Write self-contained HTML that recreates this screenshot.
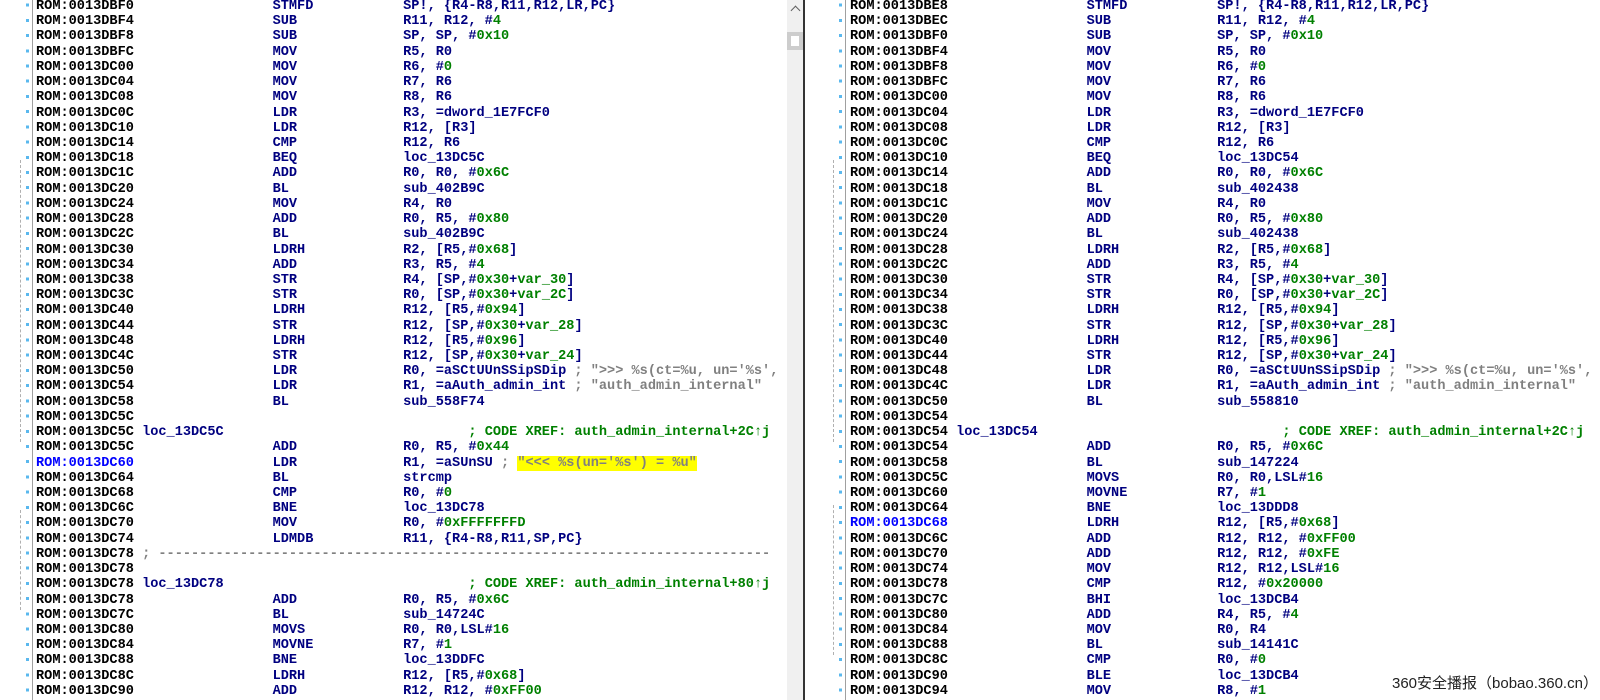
<!DOCTYPE html>
<html><head><meta charset="utf-8"><style>
html,body{margin:0;padding:0;width:1600px;height:700px;overflow:hidden;background:#fff}
.pane{position:absolute;top:0;height:700px;overflow:hidden;background:#fff}
pre{position:absolute;margin:0;top:-1px;font-family:"Liberation Mono","DejaVu Sans Mono",monospace;font-weight:bold;font-size:13.6px;line-height:15.22px;color:#000080;white-space:pre}
i{font-style:normal;color:#000}
i.b{color:#0000ff}
s{text-decoration:none;color:#008000}
u{text-decoration:none;color:#808080}
mark{background:#ffff00;color:#808080}
.dots{position:absolute;top:0;width:3px;height:700px;background:repeating-linear-gradient(to bottom,transparent 0,transparent 3.6px,#5ab8ee 3.6px,#5ab8ee 6.6px,transparent 6.6px,transparent 15.22px)}
.vl{position:absolute;top:0;width:1px;height:700px;background:#a0a0a0}
.dash{position:absolute;width:0;border-left:1px dashed #b0b0b0}
</style></head><body>
<div class="pane" style="left:0;width:787px">
<div class="vl" style="left:32px"></div>
<div class="dots" style="left:26px"></div>
<div class="dash" style="left:20px;top:160px;height:282px"></div>
<div class="dash" style="left:20px;top:510px;height:100px"></div>
<pre style="left:36px"><i>ROM:0013DBF0</i>                 STMFD           SP!, {R4-R8,R11,R12,LR,PC}
<i>ROM:0013DBF4</i>                 SUB             R11, R12, #<s>4</s>
<i>ROM:0013DBF8</i>                 SUB             SP, SP, #<s>0x10</s>
<i>ROM:0013DBFC</i>                 MOV             R5, R0
<i>ROM:0013DC00</i>                 MOV             R6, #<s>0</s>
<i>ROM:0013DC04</i>                 MOV             R7, R6
<i>ROM:0013DC08</i>                 MOV             R8, R6
<i>ROM:0013DC0C</i>                 LDR             R3, =dword_1E7FCF0
<i>ROM:0013DC10</i>                 LDR             R12, [R3]
<i>ROM:0013DC14</i>                 CMP             R12, R6
<i>ROM:0013DC18</i>                 BEQ             loc_13DC5C
<i>ROM:0013DC1C</i>                 ADD             R0, R0, #<s>0x6C</s>
<i>ROM:0013DC20</i>                 BL              sub_402B9C
<i>ROM:0013DC24</i>                 MOV             R4, R0
<i>ROM:0013DC28</i>                 ADD             R0, R5, #<s>0x80</s>
<i>ROM:0013DC2C</i>                 BL              sub_402B9C
<i>ROM:0013DC30</i>                 LDRH            R2, [R5,#<s>0x68</s>]
<i>ROM:0013DC34</i>                 ADD             R3, R5, #<s>4</s>
<i>ROM:0013DC38</i>                 STR             R4, [SP,#<s>0x30</s>+<s>var_30</s>]
<i>ROM:0013DC3C</i>                 STR             R0, [SP,#<s>0x30</s>+<s>var_2C</s>]
<i>ROM:0013DC40</i>                 LDRH            R12, [R5,#<s>0x94</s>]
<i>ROM:0013DC44</i>                 STR             R12, [SP,#<s>0x30</s>+<s>var_28</s>]
<i>ROM:0013DC48</i>                 LDRH            R12, [R5,#<s>0x96</s>]
<i>ROM:0013DC4C</i>                 STR             R12, [SP,#<s>0x30</s>+<s>var_24</s>]
<i>ROM:0013DC50</i>                 LDR             R0, =aSCtUUnSSipSDip <u>; "&gt;&gt;&gt; %s(ct=%u, un='%s', sip=%s, dip=%s)"</u>
<i>ROM:0013DC54</i>                 LDR             R1, =aAuth_admin_int <u>; "auth_admin_internal"</u>
<i>ROM:0013DC58</i>                 BL              sub_558F74
<i>ROM:0013DC5C</i>
<i>ROM:0013DC5C</i> loc_13DC5C                              <s>; CODE XREF: auth_admin_internal+2C↑j</s>
<i>ROM:0013DC5C</i>                 ADD             R0, R5, #<s>0x44</s>
<i class="b">ROM:0013DC60</i>                 LDR             R1, =aSUnSU <u>;</u> <mark>"&lt;&lt;&lt; %s(un='%s') = %u"</mark>
<i>ROM:0013DC64</i>                 BL              strcmp
<i>ROM:0013DC68</i>                 CMP             R0, #<s>0</s>
<i>ROM:0013DC6C</i>                 BNE             loc_13DC78
<i>ROM:0013DC70</i>                 MOV             R0, #<s>0xFFFFFFFD</s>
<i>ROM:0013DC74</i>                 LDMDB           R11, {R4-R8,R11,SP,PC}
<i>ROM:0013DC78</i> <u>; ---------------------------------------------------------------------------</u>
<i>ROM:0013DC78</i>
<i>ROM:0013DC78</i> loc_13DC78                              <s>; CODE XREF: auth_admin_internal+80↑j</s>
<i>ROM:0013DC78</i>                 ADD             R0, R5, #<s>0x6C</s>
<i>ROM:0013DC7C</i>                 BL              sub_14724C
<i>ROM:0013DC80</i>                 MOVS            R0, R0,LSL#<s>16</s>
<i>ROM:0013DC84</i>                 MOVNE           R7, #<s>1</s>
<i>ROM:0013DC88</i>                 BNE             loc_13DDFC
<i>ROM:0013DC8C</i>                 LDRH            R12, [R5,#<s>0x68</s>]
<i>ROM:0013DC90</i>                 ADD             R12, R12, #<s>0xFF00</s></pre>
</div>
<div style="position:absolute;left:787px;top:0;width:16px;height:700px;background:#f0f0f0"></div>
<div style="position:absolute;left:791px;top:5px;width:6px;height:6px;border-left:1.5px solid #606060;border-top:1.5px solid #606060;transform:rotate(45deg);transform-origin:center;margin-left:1px;margin-top:2px"></div>
<div style="position:absolute;left:787px;top:32px;width:16px;height:18px;background:#cdcdcd"></div>
<div style="position:absolute;left:791px;top:36px;width:8px;height:10px;background:#fff"></div>
<div style="position:absolute;left:803px;top:0;width:2px;height:700px;background:#333"></div>
<div class="pane" style="left:805px;width:795px">
<div class="vl" style="left:40px"></div>
<div class="dots" style="left:34px"></div>
<div class="dash" style="left:28px;top:160px;height:282px"></div>
<div class="dash" style="left:28px;top:505px;height:150px"></div>
<pre style="left:45px"><i>ROM:0013DBE8</i>                 STMFD           SP!, {R4-R8,R11,R12,LR,PC}
<i>ROM:0013DBEC</i>                 SUB             R11, R12, #<s>4</s>
<i>ROM:0013DBF0</i>                 SUB             SP, SP, #<s>0x10</s>
<i>ROM:0013DBF4</i>                 MOV             R5, R0
<i>ROM:0013DBF8</i>                 MOV             R6, #<s>0</s>
<i>ROM:0013DBFC</i>                 MOV             R7, R6
<i>ROM:0013DC00</i>                 MOV             R8, R6
<i>ROM:0013DC04</i>                 LDR             R3, =dword_1E7FCF0
<i>ROM:0013DC08</i>                 LDR             R12, [R3]
<i>ROM:0013DC0C</i>                 CMP             R12, R6
<i>ROM:0013DC10</i>                 BEQ             loc_13DC54
<i>ROM:0013DC14</i>                 ADD             R0, R0, #<s>0x6C</s>
<i>ROM:0013DC18</i>                 BL              sub_402438
<i>ROM:0013DC1C</i>                 MOV             R4, R0
<i>ROM:0013DC20</i>                 ADD             R0, R5, #<s>0x80</s>
<i>ROM:0013DC24</i>                 BL              sub_402438
<i>ROM:0013DC28</i>                 LDRH            R2, [R5,#<s>0x68</s>]
<i>ROM:0013DC2C</i>                 ADD             R3, R5, #<s>4</s>
<i>ROM:0013DC30</i>                 STR             R4, [SP,#<s>0x30</s>+<s>var_30</s>]
<i>ROM:0013DC34</i>                 STR             R0, [SP,#<s>0x30</s>+<s>var_2C</s>]
<i>ROM:0013DC38</i>                 LDRH            R12, [R5,#<s>0x94</s>]
<i>ROM:0013DC3C</i>                 STR             R12, [SP,#<s>0x30</s>+<s>var_28</s>]
<i>ROM:0013DC40</i>                 LDRH            R12, [R5,#<s>0x96</s>]
<i>ROM:0013DC44</i>                 STR             R12, [SP,#<s>0x30</s>+<s>var_24</s>]
<i>ROM:0013DC48</i>                 LDR             R0, =aSCtUUnSSipSDip <u>; "&gt;&gt;&gt; %s(ct=%u, un='%s', sip=%s, dip=%s)"</u>
<i>ROM:0013DC4C</i>                 LDR             R1, =aAuth_admin_int <u>; "auth_admin_internal"</u>
<i>ROM:0013DC50</i>                 BL              sub_558810
<i>ROM:0013DC54</i>
<i>ROM:0013DC54</i> loc_13DC54                              <s>; CODE XREF: auth_admin_internal+2C↑j</s>
<i>ROM:0013DC54</i>                 ADD             R0, R5, #<s>0x6C</s>
<i>ROM:0013DC58</i>                 BL              sub_147224
<i>ROM:0013DC5C</i>                 MOVS            R0, R0,LSL#<s>16</s>
<i>ROM:0013DC60</i>                 MOVNE           R7, #<s>1</s>
<i>ROM:0013DC64</i>                 BNE             loc_13DDD8
<i class="b">ROM:0013DC68</i>                 LDRH            R12, [R5,#<s>0x68</s>]
<i>ROM:0013DC6C</i>                 ADD             R12, R12, #<s>0xFF00</s>
<i>ROM:0013DC70</i>                 ADD             R12, R12, #<s>0xFE</s>
<i>ROM:0013DC74</i>                 MOV             R12, R12,LSL#<s>16</s>
<i>ROM:0013DC78</i>                 CMP             R12, #<s>0x20000</s>
<i>ROM:0013DC7C</i>                 BHI             loc_13DCB4
<i>ROM:0013DC80</i>                 ADD             R4, R5, #<s>4</s>
<i>ROM:0013DC84</i>                 MOV             R0, R4
<i>ROM:0013DC88</i>                 BL              sub_14141C
<i>ROM:0013DC8C</i>                 CMP             R0, #<s>0</s>
<i>ROM:0013DC90</i>                 BLE             loc_13DCB4
<i>ROM:0013DC94</i>                 MOV             R8, #<s>1</s></pre>
</div>
<div style="position:absolute;left:1392px;top:672px;font-family:'Liberation Sans','Noto Sans CJK SC',sans-serif;font-size:15px;color:#222;text-shadow:0 0 2px #fff,0 0 2px #fff,0 0 3px #fff;white-space:nowrap">360安全播报（bobao.360.cn）</div>
</body></html>
